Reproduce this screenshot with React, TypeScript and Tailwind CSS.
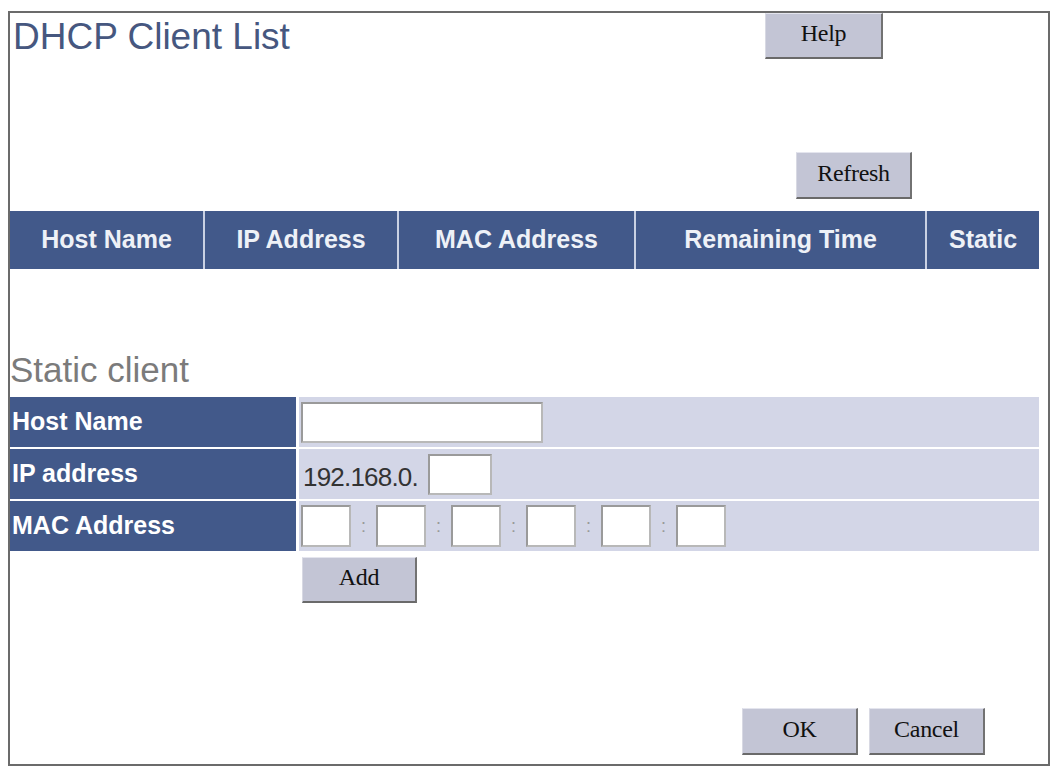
import React from "react";

const sans = "font-['Liberation_Sans',Arial,sans-serif]";

function Btn({ children, className = "" }: { children: React.ReactNode; className?: string }) {
  return (
    <button
      type="button"
      className={
        "flex items-center justify-center pb-[5px] bg-[#c3c5d5] border-t border-l border-t-[#e4e5ee] border-l-[#d8d9e3] border-r-2 border-b-2 border-r-[#727272] border-b-[#6a6a6a] font-['Liberation_Serif','Times_New_Roman',serif] text-[24px] leading-none tracking-[-0.3px] text-[#111] " +
        className
      }
    >
      {children}
    </button>
  );
}

function Field({ className = "" }: { className?: string }) {
  return (
    <input
      type="text"
      className={
        "bg-white border-2 border-t-[#9a9a9a] border-l-[#9a9a9a] border-r-[#b8b8b8] border-b-[#b8b8b8] outline-none " +
        className
      }
    />
  );
}

const headers = ["Host Name", "IP Address", "MAC Address", "Remaining Time", "Static"];

export default function App() {
  return (
    <div className={`min-h-screen bg-white pt-[11px] pl-[8px] ${sans}`}>
      <div className="flex h-[755px] w-[1042px] flex-col border-2 border-[#6b6b6b]">
        {/* title + help */}
        <div className="flex items-start">
          <h1 className="ml-[3px] mt-[4px] text-[37px] leading-[40px] text-[#46577f]">
            DHCP Client List
          </h1>
          <Btn className="ml-auto mr-[165px] h-[46px] w-[118px]">Help</Btn>
        </div>

        <Btn className="mr-[136px] mt-[93px] h-[47px] w-[116px] self-end">Refresh</Btn>

        {/* client list header */}
        <div className="mt-[12px] grid h-[58px] w-[1029px] grid-cols-[193px_192px_235px_289px_1fr] gap-x-[2px] bg-[#c9d1e3]">
          {headers.map((h) => (
            <div
              key={h}
              className="flex items-center justify-center bg-[#42598a] text-[25px] font-bold text-[#eef1f7]"
            >
              {h}
            </div>
          ))}
        </div>

        <h2 className="mt-[82px] text-[35px] leading-[38px] text-[#7b7b7b]">Static client</h2>

        {/* static client form */}
        <div className="mt-[8px] flex w-[1029px] flex-col gap-y-[2px]">
          <div className="flex h-[50px] gap-x-[3px]">
            <div className="flex w-[286px] items-center bg-[#42598a] pl-[2px] text-[25px] font-bold text-white">
              Host Name
            </div>
            <div className="flex flex-1 items-center bg-[#d3d6e7] pl-[2px]">
              <Field className="h-[41px] w-[242px]" />
            </div>
          </div>
          <div className="flex h-[50px] gap-x-[3px]">
            <div className="flex w-[286px] items-center bg-[#42598a] pl-[2px] text-[25px] font-bold text-white">
              IP address
            </div>
            <div className="flex flex-1 items-center bg-[#d3d6e7] pl-[4px]">
              <span className="pt-[6px] text-[26px] tracking-[-0.8px] text-[#333]">192.168.0.</span>
              <Field className="ml-[10px] h-[41px] w-[64px]" />
            </div>
          </div>
          <div className="flex h-[50px] gap-x-[3px]">
            <div className="flex w-[286px] items-center bg-[#42598a] pl-[2px] text-[25px] font-bold text-white">
              MAC Address
            </div>
            <div className="flex flex-1 items-center bg-[#d3d6e7] pl-[2px]">
              <Field className="h-[42px] w-[50px]" />
              <span className="w-[25px] text-center text-[18px] text-[#9a9a9a]">:</span>
              <Field className="h-[42px] w-[50px]" />
              <span className="w-[25px] text-center text-[18px] text-[#9a9a9a]">:</span>
              <Field className="h-[42px] w-[50px]" />
              <span className="w-[25px] text-center text-[18px] text-[#9a9a9a]">:</span>
              <Field className="h-[42px] w-[50px]" />
              <span className="w-[25px] text-center text-[18px] text-[#9a9a9a]">:</span>
              <Field className="h-[42px] w-[50px]" />
              <span className="w-[25px] text-center text-[18px] text-[#9a9a9a]">:</span>
              <Field className="h-[42px] w-[50px]" />
            </div>
          </div>
        </div>

        <Btn className="ml-[292px] mt-[6px] h-[46px] w-[115px]">Add</Btn>

        {/* footer actions */}
        <div className="mb-[9px] mr-[63px] mt-auto flex justify-end gap-x-[11px]">
          <Btn className="h-[47px] w-[116px]">OK</Btn>
          <Btn className="h-[47px] w-[116px]">Cancel</Btn>
        </div>
      </div>
    </div>
  );
}
